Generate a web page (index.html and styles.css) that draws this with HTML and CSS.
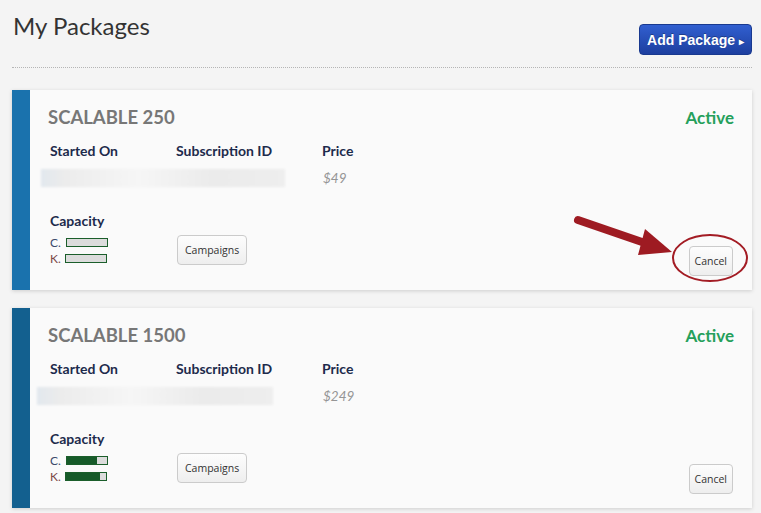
FILE: index.html
```html
<!DOCTYPE html>
<html lang="en">
<head>
    <meta charset="UTF-8">
    <meta name="viewport" content="width=device-width, initial-scale=1.0">
    <title>My Packages</title>
<link rel="stylesheet" href="styles.css">
</head>
<body>

<div class="page">
  <div class="page-head">
    <h1>My Packages</h1>
    <button class="btn-add">Add Package <span class="caret">&#9656;</span></button>
  </div>

  <div class="package">
    <div class="package-bar"></div>
    <div class="package-body">
      <div class="package-top">
        <h2>SCALABLE 250</h2>
        <span class="status">Active</span>
      </div>
      <div class="package-cols">
        <div class="col col-start">Started On</div>
        <div class="col col-sub">Subscription ID</div>
        <div class="col col-price">Price</div>
      </div>
      <div class="package-cols values">
        <div class="blurred"></div>
        <div class="price">$49</div>
      </div>
      <div class="package-foot">
        <div class="capacity">
          <h3>Capacity</h3>
          <div class="cap-row"><span class="cap-c">C.</span><span class="meter"><span class="meter-fill" style="width: 0%"></span></span></div>
          <div class="cap-row"><span class="cap-k">K.</span><span class="meter"><span class="meter-fill" style="width: 0%"></span></span></div>
        </div>
        <button class="btn-small">Campaigns</button>
        <button class="btn-small btn-cancel">Cancel</button>
      </div>
    </div>
    <!-- annotation overlay -->
    <svg class="annotation" width="200" height="80" viewBox="0 0 200 80">
      <line x1="6" y1="10" x2="70" y2="32" stroke="#9e1b22" stroke-width="8" stroke-linecap="round"/>
      <polygon points="73,19 100,42 66,45" fill="#9e1b22"/>
      <ellipse cx="138" cy="48" rx="37" ry="23" fill="none" stroke="#a31c24" stroke-width="2"/>
    </svg>
  </div>

  <div class="package">
    <div class="package-bar dark"></div>
    <div class="package-body">
      <div class="package-top">
        <h2>SCALABLE 1500</h2>
        <span class="status">Active</span>
      </div>
      <div class="package-cols">
        <div class="col col-start">Started On</div>
        <div class="col col-sub">Subscription ID</div>
        <div class="col col-price">Price</div>
      </div>
      <div class="package-cols values">
        <div class="blurred wide"></div>
        <div class="price">$249</div>
      </div>
      <div class="package-foot">
        <div class="capacity">
          <h3>Capacity</h3>
          <div class="cap-row"><span class="cap-c">C.</span><span class="meter"><span class="meter-fill" style="width: 74%"></span></span></div>
          <div class="cap-row"><span class="cap-k">K.</span><span class="meter"><span class="meter-fill" style="width: 86%"></span></span></div>
        </div>
        <button class="btn-small">Campaigns</button>
        <button class="btn-small btn-cancel">Cancel</button>
      </div>
    </div>
  </div>
</div>

</body>
</html>
```

FILE: styles.css
```css
body {
  margin: 0;
  background-color: #f4f4f4;
  font-family: 'Lato', 'Open Sans', sans-serif;
  color: #333;
}

.page {
  padding: 0 9px 0 12px;
}

.page-head {
  display: flex;
  justify-content: space-between;
  align-items: flex-start;
  padding: 10px 0 12px;
  border-bottom: 1px dotted #b5b5b5;
  margin-bottom: 22px;
}

.page-head h1 {
  margin: 0 0 0 1px;
  font-size: 24px;
  font-weight: 400;
  color: #333;
  line-height: 32px;
}

.btn-add {
  margin-top: 14px;
  height: 31px;
  width: 113px;
  padding: 0;
  border: 1px solid #19398f;
  border-radius: 4px;
  background: linear-gradient(#315fd0, #1d3f9f);
  color: #fff;
  font-family: 'Liberation Sans', Arial, sans-serif;
  font-size: 14px;
  font-weight: bold;
  text-shadow: 0 -1px 0 rgba(0, 0, 0, 0.3);
}

.btn-add .caret {
  font-size: 10px;
}

.package {
  position: relative;
  display: flex;
  height: 200px;
  margin-bottom: 18px;
  background-color: #fafafa;
  box-shadow: 0 1px 4px rgba(0, 0, 0, 0.16);
}

.package-bar {
  width: 18px;
  background-color: #1a72ad;
}

.package-bar.dark {
  background-color: #13608f;
}

.package-body {
  flex: 1;
  display: flex;
  flex-direction: column;
  padding: 15px 19px 14px 18px;
}

.package-top {
  display: flex;
  justify-content: space-between;
  align-items: center;
}

.package-top h2 {
  margin: 0;
  font-size: 18.5px;
  font-weight: 700;
  color: #777;
  line-height: 24px;
}

.status {
  font-size: 17px;
  font-weight: 700;
  color: #25a05b;
  margin-right: -1px;
}

.package-cols {
  display: flex;
  margin-top: 13px;
  padding-left: 2px;
}

.col {
  font-size: 14px;
  font-weight: 700;
  color: #1d2b4c;
}

.col-start {
  width: 126px;
}

.col-sub {
  width: 146px;
}

.values {
  margin-top: 10px;
  align-items: center;
  height: 18px;
  padding-left: 0;
}

.blurred {
  width: 244px;
  height: 18px;
  margin-left: -7px;
  margin-right: 38px;
  background: linear-gradient(90deg, #e2e8ee, #ececec 10%, #f6f6f6 40%, #ebebeb 70%, #eeeeee);
  filter: blur(1px);
}

.blurred.wide {
  width: 236px;
  margin-left: -11px;
  margin-right: 50px;
}

.price {
  font-size: 13.5px;
  font-style: italic;
  color: #959595;
}

.package-foot {
  margin-top: auto;
  display: flex;
  align-items: flex-end;
  padding-left: 2px;
}

.capacity {
  width: 127px;
  margin-bottom: 10px;
}

.capacity h3 {
  margin: 0 0 5px;
  font-size: 14px;
  font-weight: 700;
  color: #1d2b4c;
}

.cap-row {
  display: flex;
  align-items: center;
  height: 16px;
  font-size: 12px;
}

.cap-c {
  color: #3b4a6b;
  width: 16px;
}

.cap-k {
  color: #7b4747;
  width: 15px;
}

.meter {
  display: inline-block;
  width: 40px;
  height: 7px;
  border: 1px solid #1b5e2b;
  background-color: #dcdcdc;
}

.meter-fill {
  display: block;
  height: 100%;
  background-color: #165a29;
}

.btn-small {
  padding: 0 7px;
  height: 30px;
  border: 1px solid #cbcbcb;
  border-radius: 4px;
  background: linear-gradient(#fdfdfd, #eeeeee);
  font-family: 'Open Sans', sans-serif;
  font-size: 10.5px;
  color: #333;
  margin-bottom: 11px;
}

.btn-cancel {
  margin-left: auto;
  margin-bottom: 0;
  padding: 0 5px;
}

.annotation {
  position: absolute;
  left: 560px;
  top: 120px;
}
```
